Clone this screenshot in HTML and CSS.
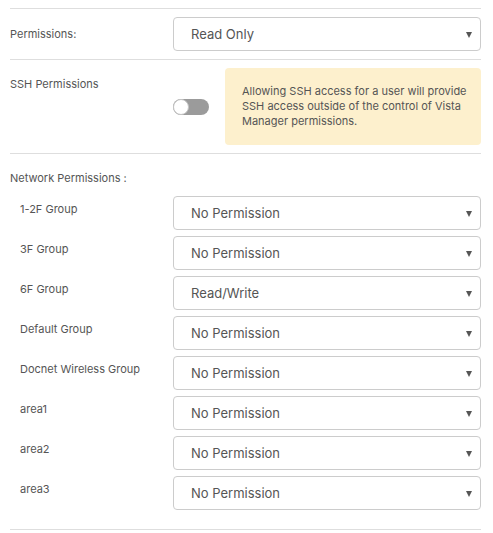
FILE: index.html
```html
<!DOCTYPE html>
<html>
<head>
<meta charset="utf-8">
<link rel="stylesheet" href="styles.css">
</head>
<body>
<div class="form">
  <div class="row row-perm">
    <div class="label">Permissions:</div>
    <div class="select"><span>Read Only</span><span class="caret"></span></div>
  </div>
  <div class="row row-ssh">
    <div class="label ssh-label">SSH Permissions</div>
    <div class="toggle-cell"><div class="toggle"><div class="knob"></div></div></div>
    <div class="warning">Allowing SSH access for a user will provide SSH access outside of the control of Vista Manager permissions.</div>
  </div>
  <div class="section">
    <div class="label section-title">Network Permissions :</div>
    <div class="groups">
      <div class="group"><div class="label glabel">1-2F Group</div><div class="select"><span>No Permission</span><span class="caret"></span></div></div>
      <div class="group"><div class="label glabel">3F Group</div><div class="select"><span>No Permission</span><span class="caret"></span></div></div>
      <div class="group"><div class="label glabel">6F Group</div><div class="select"><span>Read/Write</span><span class="caret"></span></div></div>
      <div class="group"><div class="label glabel">Default Group</div><div class="select"><span>No Permission</span><span class="caret"></span></div></div>
      <div class="group"><div class="label glabel">Docnet Wireless Group</div><div class="select"><span>No Permission</span><span class="caret"></span></div></div>
      <div class="group"><div class="label glabel">area1</div><div class="select"><span>No Permission</span><span class="caret"></span></div></div>
      <div class="group"><div class="label glabel">area2</div><div class="select"><span>No Permission</span><span class="caret"></span></div></div>
      <div class="group"><div class="label glabel">area3</div><div class="select"><span>No Permission</span><span class="caret"></span></div></div>
    </div>
  </div>
</div>
</body>
</html>
```

FILE: styles.css
```css
* { box-sizing: border-box; }
html, body { margin: 0; padding: 0; background: #fff; }
body { font-family: Inter, "Noto Sans", sans-serif; color: #555; }
.form {
  margin: 8px 12px 0 10px;
  width: 471px;
  border-top: 1px solid #dedede;
}
.row {
  display: flex;
  border-bottom: 1px solid #dedede;
  padding: 8px 0;
}
.row-perm { align-items: center; }
.label {
  font-size: 11px;
  line-height: 14px;
  color: #555;
}
.row .label { width: 163px; flex: none; }
.select {
  flex: 1;
  height: 34px;
  border: 1px solid #ccc;
  border-radius: 4px;
  display: flex;
  align-items: center;
  justify-content: space-between;
  padding: 0 8px 0 17px;
  font-size: 13px;
  color: #555;
  background: #fff;
}
.caret {
  width: 0; height: 0;
  border-left: 3.5px solid transparent;
  border-right: 3.5px solid transparent;
  border-top: 6px solid #555;
  margin-top: 1px;
}
.row-ssh { align-items: stretch; }
.ssh-label { padding-top: 9px; }
.toggle-cell {
  width: 52px;
  flex: none;
  display: flex;
  align-items: center;
}
.toggle {
  width: 36px;
  height: 16px;
  border-radius: 8px;
  background: #9b9b9b;
  position: relative;
}
.knob {
  position: absolute;
  left: 0; top: 0;
  width: 16px; height: 16px;
  border-radius: 50%;
  background: #fff;
  border: 1px solid #c4c4c4;
}
.warning {
  flex: 1;
  background: #fdf0cd;
  border-radius: 4px;
  padding: 16px 14px 16px 17px;
  font-size: 11px;
  line-height: 15px;
  color: #555;
  min-height: 77px;
}
.section {
  border-bottom: 1px solid #dedede;
  padding: 17px 0 19px;
}
.section-title { margin-bottom: 11px; }
.groups { display: flex; flex-direction: column; gap: 6px; }
.group { display: flex; align-items: flex-start; padding-left: 10px; }
.glabel { width: 153px; flex: none; padding-top: 6px; }
```
